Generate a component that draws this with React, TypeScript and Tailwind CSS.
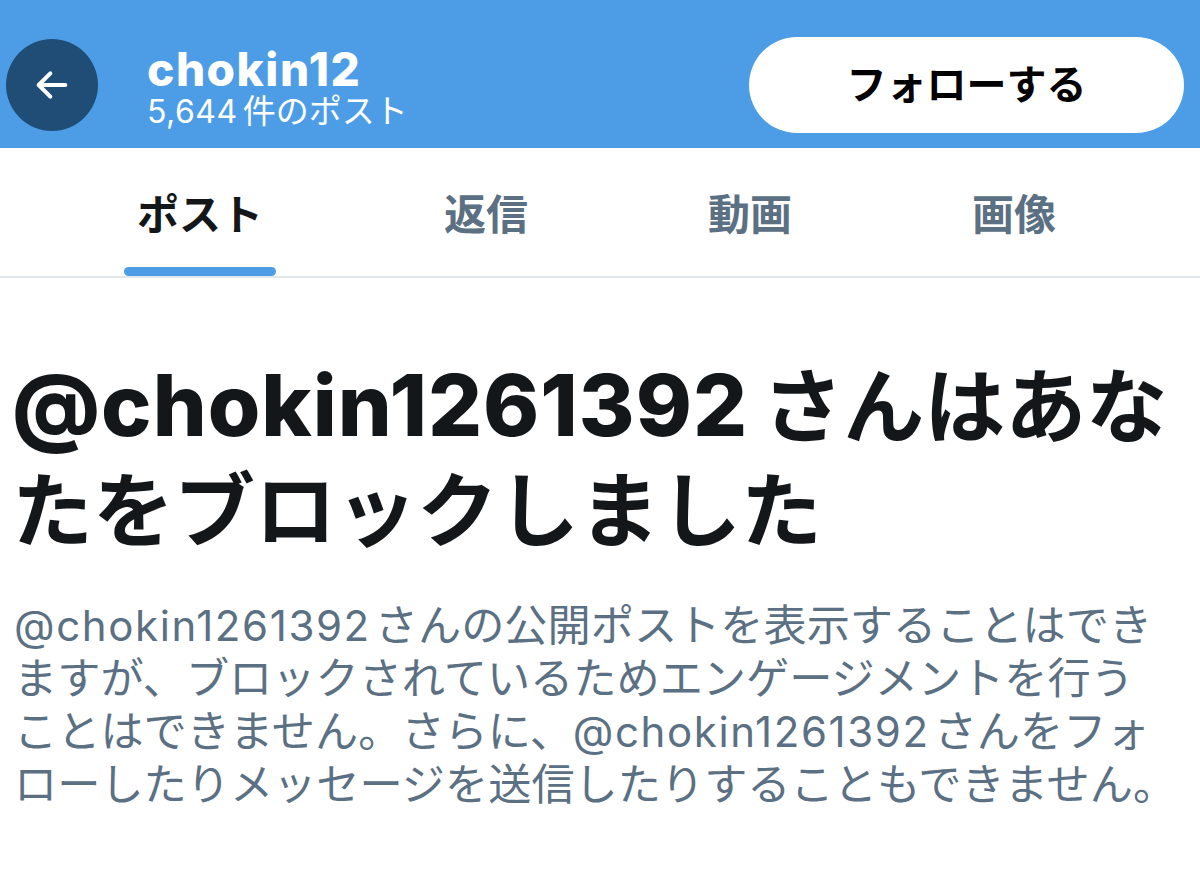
import React from 'react';

const font = { fontFamily: '"Inter", "Noto Sans CJK JP", sans-serif' };

const tabs = ['ポスト', '返信', '動画', '画像'];

function Handle({ className }: { className: string }) {
    return <span className={className}>@chokin1261392</span>;
}

function Header() {
    return (
        <div className="flex items-center h-[148px] bg-[#4d9de6] pt-[22px] px-[6px]">
            <button className="size-[92px] rounded-full bg-[#1f4d75] flex items-center justify-center shrink-0">
                <svg width="40" height="40" viewBox="0 0 24 24" fill="none" stroke="white" strokeWidth="2.4" strokeLinecap="round" strokeLinejoin="round">
                    <path d="M20 12H4.5" />
                    <path d="M11 5l-7 7 7 7" />
                </svg>
            </button>
            <div className="ml-[49px] mt-[10px] flex flex-col text-white">
                <p className="text-[46px] font-extrabold leading-[48px] tracking-[1.5px]">chokin12</p>
                <p className="leading-[36px] whitespace-nowrap">
                    <span className="text-[32px] tracking-[0.5px]">5,644</span>
                    <span className="text-[33px] ml-[5px]">件のポスト</span>
                </p>
            </div>
            <button className="ml-auto mr-[10px] w-[435px] h-[96px] rounded-full bg-white text-black text-[40px] font-bold flex items-center justify-center">
                フォローする
            </button>
        </div>
    );
}

function Tabs() {
    return (
        <div className="flex h-[130px] border-b-2 border-[#e1e6ea] pl-[68px]">
            {tabs.map((t, i) => (
                <div key={t} className={`w-[264px] flex flex-col items-center justify-end ${i === 0 ? 'mr-[22px]' : ''}`}>
                    <span className={`text-[42px] font-bold leading-[42px] ${i === 0 ? 'text-[#14171a]' : 'text-[#5b7083]'}`}>{t}</span>
                    <div className={`mt-[31px] h-[9px] w-[152px] rounded-full ${i === 0 ? 'bg-[#4d9de6]' : 'bg-transparent'}`} />
                </div>
            ))}
        </div>
    );
}

export default function App() {
    return (
        <div className="w-[1200px] h-[894px] bg-white overflow-hidden" style={font}>
            <Header />
            <Tabs />
            <div className="px-[12px] pt-[76px]">
                <h1 className="text-[81px] font-bold leading-[104px] text-[#14171a] whitespace-nowrap">
                    <Handle className="text-[85px] font-extrabold tracking-[1px] mr-[14px]" />さんはあな<br />たをブロックしました
                </h1>
                <p className="mt-[36px] text-[43.2px] leading-[53px] text-[#5b7083] ml-[2px] whitespace-nowrap">
                    <Handle className="text-[42px] tracking-[1.6px] mr-[4px]" />さんの公開ポストを表示することはでき<br />
                    ますが、ブロックされているためエンゲージメントを行う<br />
                    ことはできません。さらに、<Handle className="text-[42px] tracking-[1.6px] mr-[4px]" />さんをフォ<br />
                    ローしたりメッセージを送信したりすることもできません。
                </p>
            </div>
        </div>
    );
}
